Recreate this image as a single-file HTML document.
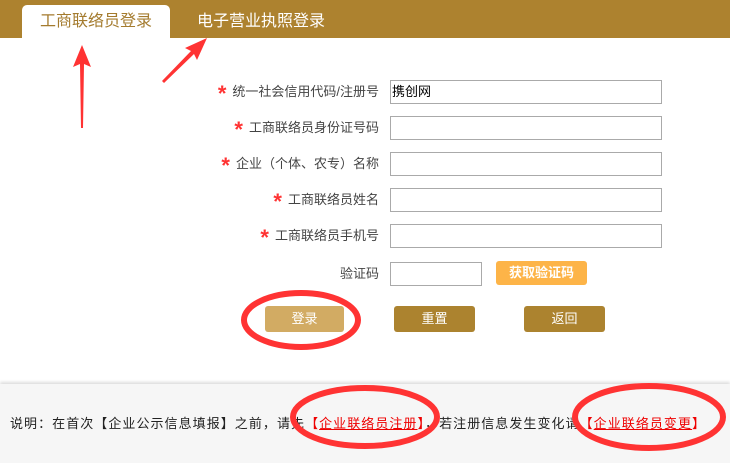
<!DOCTYPE html>
<html><head><meta charset="utf-8"><style>
*{margin:0;padding:0;box-sizing:border-box}
body{width:730px;height:463px;position:relative;background:#fff;font-family:"Liberation Sans","Noto Sans CJK SC",sans-serif;overflow:hidden;color:#333}
.bar{position:absolute;left:0;top:0;width:730px;height:38px;background:#ad822f}
.tab{position:absolute;left:22px;top:5px;width:148px;height:33px;background:#fff;border-radius:5px 5px 0 0;color:#a47b2e;font-size:16px;text-align:center;line-height:34px}
.tab2{position:absolute;left:197px;top:5px;color:#fff;font-size:16px;line-height:34px}
.lbl{position:absolute;right:351px;font-size:13px;color:#444;line-height:24px;white-space:nowrap}
.lbl b{color:#f33;font-weight:bold;font-size:22px;vertical-align:-5px;margin-right:6px}
.in{position:absolute;left:390px;width:272px;height:24px;border:1px solid #aaa;background:#fff;font-size:13px;color:#000;line-height:22px;padding-left:1px}
.btn{position:absolute;color:#fff;font-size:13px;text-align:center;border-radius:3px}
.foot{position:absolute;left:0;top:384px;width:730px;height:79px;background:#f6f6f6;box-shadow:0 -2px 3px #ddd}
.ft{position:absolute;left:10px;top:413px;font-size:13px;color:#222;white-space:nowrap;letter-spacing:1.05px}
.ft span{color:#e00}
.ft u{color:#e00}
</style></head><body>
<div class="bar"></div>
<div class="tab">工商联络员登录</div>
<div class="tab2">电子营业执照登录</div>

<div class="lbl" style="top:80px"><b>*</b>统一社会信用代码/注册号</div>
<div class="in" style="top:80px">携创网</div>
<div class="lbl" style="top:116px"><b>*</b>工商联络员身份证号码</div>
<div class="in" style="top:116px"></div>
<div class="lbl" style="top:152px"><b>*</b>企业（个体、农专）名称</div>
<div class="in" style="top:152px"></div>
<div class="lbl" style="top:188px"><b>*</b>工商联络员姓名</div>
<div class="in" style="top:188px"></div>
<div class="lbl" style="top:224px"><b>*</b>工商联络员手机号</div>
<div class="in" style="top:224px"></div>
<div class="lbl" style="top:262px">验证码</div>
<div class="in" style="top:262px;width:92px"></div>
<div class="btn" style="left:496px;top:261px;width:91px;height:24px;line-height:24px;background:#fdb448;font-weight:bold">获取验证码</div>
<div class="btn" style="left:265px;top:306px;width:79px;height:26px;line-height:26px;background:#d2ab63">登录</div>
<div class="btn" style="left:394px;top:306px;width:81px;height:26px;line-height:26px;background:#ac832f">重置</div>
<div class="btn" style="left:524px;top:306px;width:81px;height:26px;line-height:26px;background:#ac832f">返回</div>

<div class="foot"></div>
<div class="ft">说明：在首次【企业公示信息填报】之前，请先<span>【<u>企业联络员注册</u>】</span>，若注册信息发生变化请<span>【<u>企业联络员变更</u>】</span></div>

<svg width="730" height="463" style="position:absolute;left:0;top:0" xmlns="http://www.w3.org/2000/svg">
<g fill="#f33">
<polygon points="82,45 73,67 80,64 81,128 83,128 84,64 91,67"/>
<polygon points="207,38 185,48 191,51 162,81 164,83 194,54 197,60"/>
</g>
<g fill="none" stroke="#f33" stroke-width="6">
<ellipse cx="301" cy="320" rx="57" ry="27"/>
<ellipse cx="365" cy="417" rx="72" ry="29"/>
<ellipse cx="649" cy="417" rx="74" ry="31"/>
</g>
</svg>
</body></html>
